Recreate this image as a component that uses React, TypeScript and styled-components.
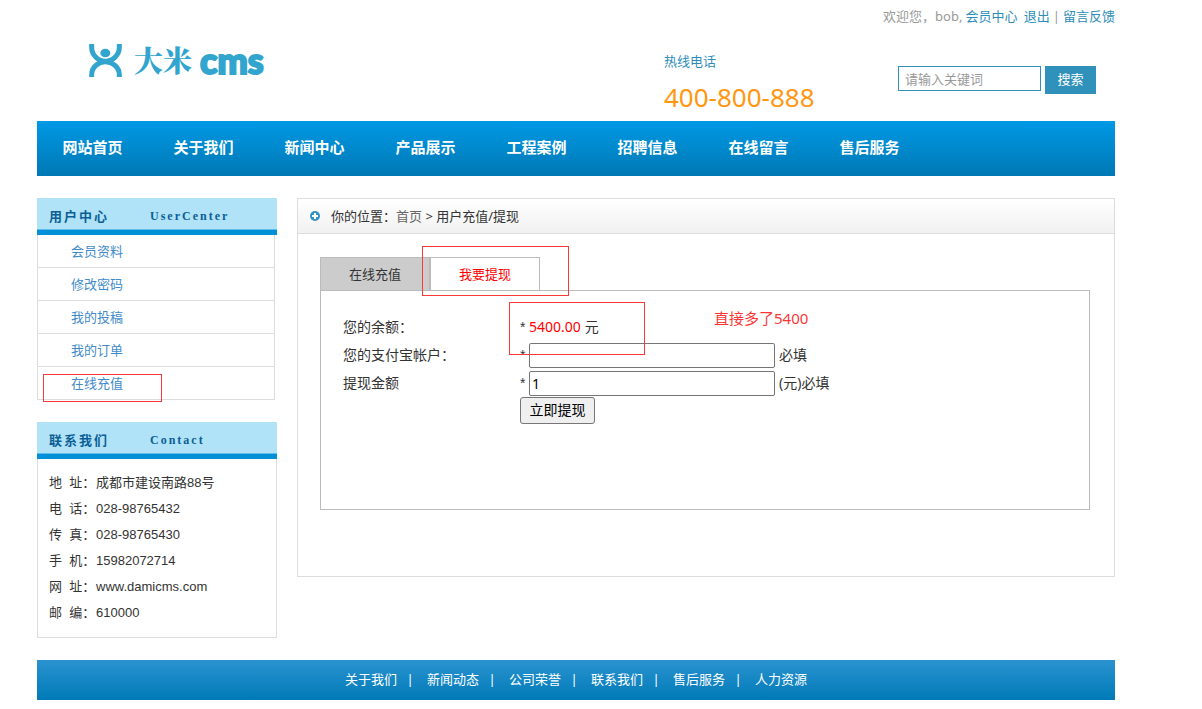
import React from "react";
import styled, { createGlobalStyle } from "styled-components";

const sans = `"Noto Sans", "Noto Sans CJK SC", sans-serif`;
const arial = `"Liberation Sans", "Noto Sans CJK SC", sans-serif`;

const GlobalStyle = createGlobalStyle`
  *, *::before, *::after { box-sizing: border-box; }
  body { margin: 0; background: #fff; color: #333; font: 13px/20px ${sans}; }
  ul, dl, dd, h1, h2, p { margin: 0; padding: 0; list-style: none; }
  a { color: inherit; text-decoration: none; }
`;

const Page = styled.div`
  padding: 0 87px 9px 37px;
  min-width: 1040px;
`;

const UserBar = styled.div`
  display: flex;
  justify-content: flex-end;
  padding: 6px 0;
  gap: 3px;
  color: #999;
  a { color: #2e8db6; }
`;

const Header = styled.header`
  display: flex;
  align-items: flex-start;
  height: 89px;
  padding: 0 19px 0 52px;
`;

const Logo = styled.a`
  display: flex;
  align-items: center;
  height: 40px;
  margin-top: 8px;
  color: #32a5cf;
`;

const LogoName = styled.span`
  margin-left: 12px;
  font: 900 29px/40px "Noto Serif CJK SC", "Noto Sans CJK SC", sans-serif;
`;

const LogoSuffix = styled.span`
  margin-left: 8px;
  font: 900 36px/40px Lato, "Liberation Sans", sans-serif;
  -webkit-text-stroke: 2px #32a5cf;
`;

const Hotline = styled.div`
  flex: 0 0 234px;
  margin-left: auto;
  padding-top: 19px;
  color: #2e8db6;
`;

const Phone = styled.p`
  color: #ff9711;
  font-size: 26px;
  line-height: 52px;
`;

const Search = styled.form`
  display: flex;
  align-items: flex-start;
  gap: 4px;
  padding-top: 34px;
`;

const SearchInput = styled.input`
  width: 143px;
  height: 25px;
  padding: 0 6px;
  border: 1px solid #3091ba;
  font: 13px/20px ${sans};
  color: #333;
  &::placeholder { color: #999; }
`;

const SearchButton = styled.button`
  width: 51px;
  height: 28px;
  padding: 0 0 2px;
  border: 0;
  background: #3091ba;
  color: #fff;
  font: 13px/20px ${sans};
`;

const Nav = styled.nav`
  height: 55px;
  background: linear-gradient(#0099e5, #0078b4);
  ul { display: flex; }
  a {
    display: block;
    width: 111px;
    color: #fff;
    font-size: 15px;
    font-weight: bold;
    line-height: 52px;
    text-align: center;
  }
`;

const Columns = styled.div`
  display: flex;
  align-items: flex-start;
  gap: 20px;
  padding: 22px 0;
`;

const Sidebar = styled.aside`
  display: flex;
  flex-direction: column;
  flex: 0 0 240px;
  gap: 22px;
`;

const SideTitle = styled.h2`
  display: flex;
  height: 37px;
  padding-left: 12px;
  background: linear-gradient(#b0e2f8 31px, #5fbdea 31px, #5fbdea 32px, #0090d7 32px);
  color: #0b5f95;
  font: bold 13px/36px ${sans};
  letter-spacing: 2px;
  span:first-child { width: 101px; }
`;

const TitleEn = styled.span`
  font-family: "Liberation Serif", serif;
  font-size: 12px;
`;

const Menu = styled.ul`
  margin-right: 2px;
  border: solid #ddd;
  border-width: 0 1px;
`;

const MenuItem = styled.li`
  position: relative;
  height: 33px;
  padding-left: 33px;
  border-bottom: 1px solid #ddd;
  line-height: 32px;
  a { color: #428bca; }
`;

const Contact = styled.dl`
  padding: 11px;
  border: 1px solid #ddd;
  border-top: 0;
  font-family: ${arial};
  line-height: 26px;
  div { display: flex; }
  dt { width: 47px; white-space: pre; }
`;

const Main = styled.main`
  flex: 1;
  min-height: 379px;
  border: 1px solid #ddd;
`;

const Crumbs = styled.div`
  display: flex;
  align-items: center;
  height: 35px;
  padding-left: 12px;
  border-bottom: 1px solid #ddd;
  background: linear-gradient(#fff, #f1f1f1);
  svg { margin-right: 10px; }
  a { color: #666; }
`;

const Tabs = styled.div`
  display: flex;
  position: relative;
  margin: 23px 0 0 22px;
`;

const Tab = styled.button<{ $active?: boolean }>`
  width: 110px;
  height: 33px;
  padding: 0;
  border: 1px solid #bbb;
  border-bottom: 0;
  background: ${(p) => (p.$active ? "#fff" : "#ccc")};
  color: ${(p) => (p.$active ? "#f00" : "#333")};
  font: 13px/32px ${sans};
`;

const Panel = styled.form`
  position: relative;
  min-height: 220px;
  margin: 0 24px 0 22px;
  padding: 22px;
  border: 1px solid #bbb;
  font-size: 14px;
`;

const Row = styled.div`
  display: flex;
  align-items: center;
  height: 28px;
`;

const Label = styled.label`
  width: 177px;
`;

const Star = styled.span`
  width: 9px;
  font-family: ${arial};
`;

const Amount = styled.output`
  margin-right: 4px;
  color: #f00;
`;

const Field = styled.input`
  width: 246px;
  height: 25px;
  margin-right: 4px;
  padding: 0 2px;
  border: 1px solid #767676;
  border-radius: 2px;
  font: 14px/20px ${sans};
  color: #000;
`;

const Submit = styled.button`
  width: 75px;
  height: 27px;
  margin-left: 177px;
  padding: 0 0 2px;
  border: 1px solid #767676;
  border-radius: 3px;
  background: #efefef;
  color: #000;
  font: 14px/20px ${sans};
`;

const Mark = styled.span<{ $x: number; $y: number; $w: number; $h: number }>`
  position: absolute;
  left: ${(p) => p.$x}px;
  top: ${(p) => p.$y}px;
  width: ${(p) => p.$w}px;
  height: ${(p) => p.$h}px;
  border: 1px solid #fb3838;
  pointer-events: none;
  z-index: 1;
`;

const Note = styled.p`
  position: absolute;
  left: 393px;
  top: 17px;
  color: #fb3838;
  font-size: 15px;
`;

const Footer = styled.footer`
  display: flex;
  justify-content: center;
  height: 40px;
  background: linear-gradient(#2a93d0, #007ab7);
  color: #fff;
  line-height: 38px;
`;

const Bar = styled.span`
  width: 30px;
  padding-right: 4px;
  text-align: center;
`;

const navItems = ["网站首页", "关于我们", "新闻中心", "产品展示", "工程案例", "招聘信息", "在线留言", "售后服务"];
const menuItems = ["会员资料", "修改密码", "我的投稿", "我的订单", "在线充值"];
const contacts = [
  ["地", "址", "成都市建设南路88号"],
  ["电", "话", "028-98765432"],
  ["传", "真", "028-98765430"],
  ["手", "机", "15982072714"],
  ["网", "址", "www.damicms.com"],
  ["邮", "编", "610000"],
];
const footerItems = ["关于我们", "新闻动态", "公司荣誉", "联系我们", "售后服务", "人力资源"];

export default function App() {
  return (
    <>
      <GlobalStyle />
      <Page>
        <UserBar>
          <span>欢迎您，bob,</span>
          <a href="#member">会员中心</a>
          <a href="#logout">&nbsp;退出</a>
          <span>|</span>
          <a href="#feedback">留言反馈</a>
        </UserBar>
        <Header>
          <Logo href="#home">
            <svg width="33" height="33" viewBox="0 0 99 99" fill="none" stroke="currentColor" strokeWidth="15" aria-hidden="true">
              <path d="M8 0V10C8 34 28 52 49 52S91 34 91 10V0" />
              <path d="M8 99V92C8 70 28 53 49 53S91 70 91 92V99" />
              <ellipse cx="49" cy="27" rx="15" ry="13" fill="currentColor" stroke="none" />
            </svg>
            <LogoName>大米</LogoName>
            <LogoSuffix>cms</LogoSuffix>
          </Logo>
          <Hotline>
            <p>热线电话</p>
            <Phone>400-800-888</Phone>
          </Hotline>
          <Search>
            <SearchInput type="text" placeholder="请输入关键词" aria-label="请输入关键词" />
            <SearchButton type="button">搜索</SearchButton>
          </Search>
        </Header>
        <Nav>
          <ul>
            {navItems.map((t) => (
              <li key={t}><a href="#nav">{t}</a></li>
            ))}
          </ul>
        </Nav>
        <Columns>
          <Sidebar>
            <section>
              <SideTitle><span>用户中心</span><TitleEn>UserCenter</TitleEn></SideTitle>
              <Menu>
                {menuItems.map((t, i) => (
                  <MenuItem key={t}>
                    <a href="#menu">{t}</a>
                    {i === menuItems.length - 1 && <Mark $x={5} $y={7} $w={119} $h={28} />}
                  </MenuItem>
                ))}
              </Menu>
            </section>
            <section>
              <SideTitle><span>联系我们</span><TitleEn>Contact</TitleEn></SideTitle>
              <Contact>
                {contacts.map(([a, b, value]) => (
                  <div key={a}><dt>{`${a}\u00a0\u00a0${b}：`}</dt><dd>{value}</dd></div>
                ))}
              </Contact>
            </section>
          </Sidebar>
          <Main>
            <Crumbs>
              <svg width="11" height="11" viewBox="0 0 11 11" aria-hidden="true">
                <circle cx="5" cy="5" r="5" fill="#3292c2" />
                <path d="M5 2v6M2 5h6" stroke="#fff" strokeWidth="2" />
              </svg>
              <span>你的位置：<a href="#home">首页</a> &gt; 用户充值/提现</span>
            </Crumbs>
            <Tabs>
              <Tab type="button">在线充值</Tab>
              <Tab type="button" $active>我要提现</Tab>
              <Mark $x={102} $y={-11} $w={147} $h={50} />
            </Tabs>
            <Panel>
              <Row>
                <Label htmlFor="balance">您的余额：</Label>
                <Star>*</Star>
                <Amount id="balance">5400.00</Amount>元
              </Row>
              <Row>
                <Label htmlFor="account">您的支付宝帐户：</Label>
                <Star>*</Star>
                <Field id="account" type="text" />必填
              </Row>
              <Row>
                <Label htmlFor="money">提现金额</Label>
                <Star>*</Star>
                <Field id="money" type="text" defaultValue="1" />(元)必填
              </Row>
              <Submit type="button">立即提现</Submit>
              <Mark $x={188} $y={11} $w={136} $h={53} />
              <Note>直接多了5400</Note>
            </Panel>
          </Main>
        </Columns>
        <Footer>
          {footerItems.map((t, i) => (
            <React.Fragment key={t}>
              {i > 0 && <Bar>|</Bar>}
              <a href="#footer">{t}</a>
            </React.Fragment>
          ))}
        </Footer>
      </Page>
    </>
  );
}
